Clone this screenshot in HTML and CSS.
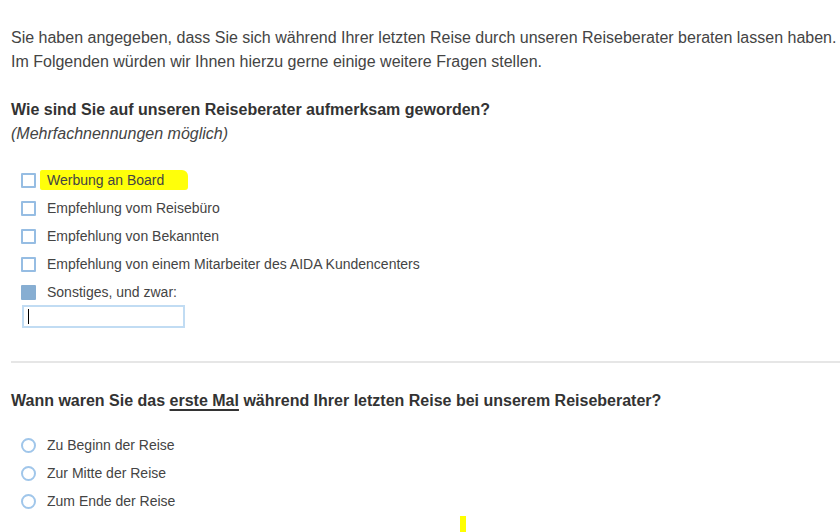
FILE: index.html
```html
<!DOCTYPE html>
<html lang="de">
<head>
<meta charset="utf-8">
<link rel="stylesheet" href="styles.css">
</head>
<body>
<div class="page">
  <p class="intro">Sie haben angegeben, dass Sie sich während Ihrer letzten Reise durch unseren Reiseberater beraten lassen haben.<br>Im Folgenden würden wir Ihnen hierzu gerne einige weitere Fragen stellen.</p>

  <section class="question">
    <h2 class="q-title">Wie sind Sie auf unseren Reiseberater aufmerksam geworden?</h2>
    <p class="q-hint">(Mehrfachnennungen möglich)</p>
    <ul class="options">
      <li class="option"><span class="check"></span><span class="label highlight">Werbung an Board</span></li>
      <li class="option"><span class="check"></span><span class="label">Empfehlung vom Reisebüro</span></li>
      <li class="option"><span class="check"></span><span class="label">Empfehlung von Bekannten</span></li>
      <li class="option"><span class="check"></span><span class="label">Empfehlung von einem Mitarbeiter des AIDA Kundencenters</span></li>
      <li class="option"><span class="check checked"></span><span class="label">Sonstiges, und zwar:</span></li>
    </ul>
    <div class="other"><span class="caret"></span></div>
  </section>

  <hr class="sep">

  <section class="question q2">
    <h2 class="q-title">Wann waren Sie das <u>erste Mal</u> während Ihrer letzten Reise bei unserem Reiseberater?</h2>
    <ul class="options radios">
      <li class="option"><span class="radio"></span><span class="label">Zu Beginn der Reise</span></li>
      <li class="option"><span class="radio"></span><span class="label">Zur Mitte der Reise</span></li>
      <li class="option"><span class="radio"></span><span class="label">Zum Ende der Reise</span></li>
    </ul>
  </section>
  <span class="mark"></span>
</div>
</body>
</html>
```

FILE: styles.css
```css
html, body {
  margin: 0;
  padding: 0;
  background: #fff;
}
body {
  font-family: "Liberation Sans", Arial, sans-serif;
  color: #444;
  overflow: hidden;
}
.page {
  position: relative;
  width: 840px;
  height: 532px;
  padding: 26px 0 0 11px;
  box-sizing: border-box;
}
.intro {
  margin: 0;
  font-size: 16px;
  line-height: 24px;
}
.question {
  margin-top: 24px;
}
.q-title {
  margin: 0;
  font-size: 16px;
  line-height: 24px;
  font-weight: bold;
  color: #333;
}
.q-title u {
  text-decoration-thickness: 2px;
  text-underline-offset: 3px;
}
.q-hint {
  margin: 0;
  font-size: 16px;
  line-height: 24px;
  font-style: italic;
}
.options {
  list-style: none;
  margin: 20px 0 0 0;
  padding: 0 0 0 10px;
}
.option {
  display: flex;
  align-items: center;
  height: 28px;
  font-size: 14px;
}
.check {
  width: 11px;
  height: 11px;
  border: 2px solid #96bde3;
  border-radius: 1px;
  margin-right: 11px;
  flex: none;
}
.check.checked {
  background: #87aed2;
  border-color: #87aed2;
}
.label {
  position: relative;
}
.highlight {
  background: #ffff0a;
  margin-left: -7px;
  padding: 2px 24px 2px 7px;
  border-radius: 2px 6px 3px 2px;
}
.other {
  margin: -1px 0 0 11px;
  height: 19px;
  border: 2px solid #c1dcf3;
  display: flex;
  align-items: center;
  padding-left: 4px;
  box-sizing: content-box;
  width: 155px;
}
.caret {
  width: 1px;
  height: 15px;
  background: #000;
}
.sep {
  border: 0;
  height: 2px;
  background: #e6e6e6;
  margin: 33px 0 0 0;
}
.q2 {
  margin-top: 26px;
}
.radios {
  margin-top: 18px;
}
.radio {
  width: 11px;
  height: 11px;
  border: 2px solid #a0c6ea;
  border-radius: 50%;
  margin-right: 11px;
  flex: none;
}
.mark {
  position: absolute;
  left: 460px;
  top: 516px;
  width: 6px;
  height: 20px;
  background: #ffff00;
}
```
